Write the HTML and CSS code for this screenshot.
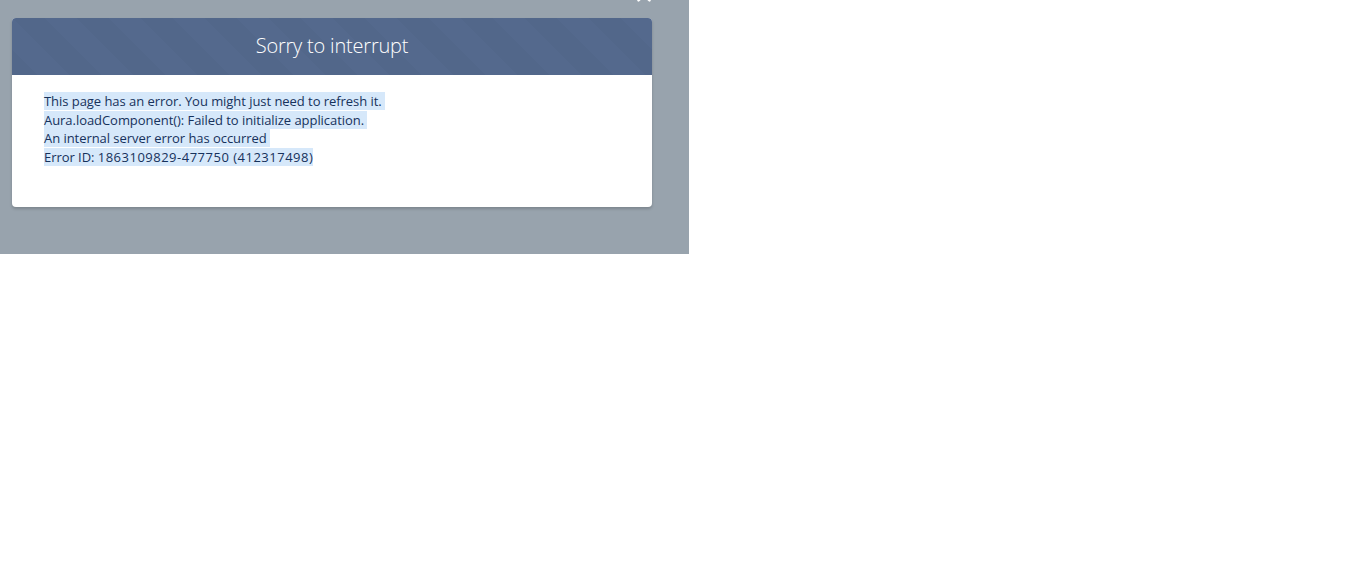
FILE: index.html
```html
<!DOCTYPE html>
<html lang="en">
<head>
<meta charset="utf-8">
<title>Sorry to interrupt</title>
<link rel="stylesheet" href="styles.css">
</head>
<body>
<div class="backdrop">
  <div class="modal">
    <button class="close" aria-label="Close">
      <svg viewBox="0 0 14 14" width="14" height="14"><path d="M1.5 1.5 L12.5 12.5 M12.5 1.5 L1.5 12.5" stroke="#fff" stroke-width="2.4" stroke-linecap="round" fill="none"/></svg>
    </button>
    <header class="modal-header">
      <h2 class="title">Sorry to interrupt</h2>
    </header>
    <div class="modal-body">
      <div class="line"><span class="sel">This page has an error. You might just need to refresh it. </span></div>
      <div class="line"><span class="sel">Aura.loadComponent(): Failed to initialize application. </span></div>
      <div class="line"><span class="sel">An internal server error has occurred </span></div>
      <div class="line"><span class="sel">Error ID: <span class="num">1863109829-477750 (412317498)</span></span></div>
    </div>
  </div>
</div>
</body>
</html>
```

FILE: styles.css
```css
html, body {
  margin: 0;
  padding: 0;
  background: #fff;
}
body {
  font-family: "Open Sans", "Liberation Sans", sans-serif;
}
.backdrop {
  width: 689px;
  height: 254px;
  background: #98a3ad;
  padding: 18px 0 0 12px;
  box-sizing: border-box;
  overflow: hidden;
}
.modal {
  position: relative;
  width: 640px;
  border-radius: 4px;
  background: #fff;
  box-shadow: 0 2px 3px rgba(0, 0, 0, 0.18);
}
.close {
  position: absolute;
  right: 1px;
  top: -30px;
  width: 14px;
  height: 14px;
  padding: 0;
  border: 0;
  background: transparent;
  line-height: 0;
}
.modal-header {
  height: 57px;
  border-radius: 4px 4px 0 0;
  background-color: #54698d;
  background-image: linear-gradient(45deg, rgba(0,0,0,0.025) 25%, transparent 25%, transparent 50%, rgba(0,0,0,0.025) 50%, rgba(0,0,0,0.025) 75%, transparent 75%, transparent);
  background-size: 64px 64px;
  display: flex;
  align-items: center;
  justify-content: center;
}
.title {
  margin: 0;
  color: #fff;
  font-size: 20px;
  font-weight: 300;
  line-height: 1.25;
  letter-spacing: -0.2px;
  padding-bottom: 2px;
}
.modal-body {
  padding: 17px 32px 41px;
  color: #16325c;
  font-size: 13px;
  line-height: 18.5px;
  letter-spacing: -0.05px;
}
.line {
  white-space: pre;
}
.sel {
  background: #d6e8fa;
}
.num {
  letter-spacing: 0.5px;
}
```
